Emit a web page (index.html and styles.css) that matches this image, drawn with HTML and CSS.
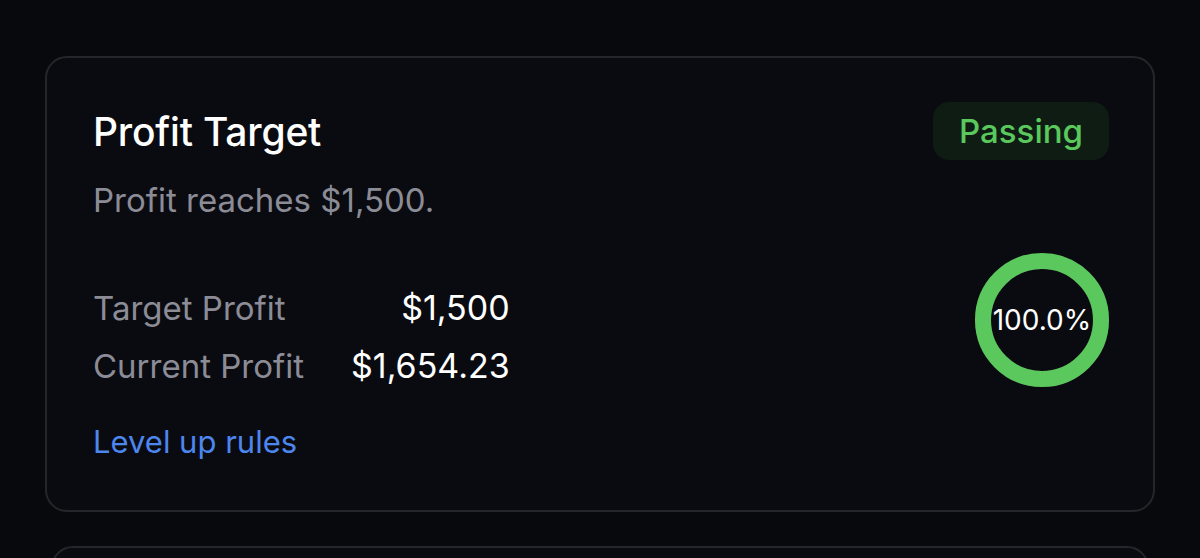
FILE: index.html
```html
<!DOCTYPE html>
<html lang="en">
<head>
    <meta charset="UTF-8">
    <meta name="viewport" content="width=device-width, initial-scale=1.0">
    <title>Objectives</title>
    <link rel="stylesheet" href="styles.css">
</head>
<body>
    <div class="page">
        <div class="card">
            <div class="card-head">
                <div class="card-title">Profit Target</div>
                <div class="badge badge-pass">Passing</div>
            </div>
            <div class="card-desc">Profit reaches $1,500.</div>

            <div class="card-body">
                <div class="card-info">
                    <div class="stats">
                        <div class="stat-label">Target Profit</div>
                        <div class="stat-value">$1,500</div>
                        <div class="stat-label">Current Profit</div>
                        <div class="stat-value">$1,654.23</div>
                    </div>
                    <a class="rules-link" href="#">Level up rules</a>
                </div>

                <div class="ring">
                    <svg viewBox="0 0 134 134" width="134" height="134">
                        <circle cx="67" cy="67" r="59" fill="none" stroke="#2a2b31" stroke-width="16"/>
                        <circle cx="67" cy="67" r="59" fill="none" stroke="#5ac85c" stroke-width="16"
                                stroke-dasharray="371 371" transform="rotate(-90 67 67)"/>
                    </svg>
                    <div class="ring-label">100.0%</div>
                </div>
            </div>
        </div>

        <div class="card card-next"></div>
    </div>
</body>
</html>
```

FILE: styles.css
```css
* {
    margin: 0;
    padding: 0;
    box-sizing: border-box;
}

body {
    background-color: #08090d;
    color: #fff;
    font-family: 'Inter', 'Noto Sans', sans-serif;
    height: 558px;
    overflow: hidden;
}

.page {
    padding: 56px 45px 0 45px;
    display: flex;
    flex-direction: column;
    gap: 34px;
}

.card {
    background-color: #0a0b10;
    border: 2px solid #25262b;
    border-radius: 22px;
    padding: 44px 44px 50px 46px;
}

.card-next {
    margin: 0 6px;
    height: 120px;
}

.card-head {
    display: flex;
    justify-content: space-between;
    align-items: center;
}

.card-title {
    font-size: 39px;
    font-weight: 500;
    letter-spacing: -0.2px;
}

.badge {
    font-size: 33px;
    font-weight: 500;
    padding: 0 26px;
    height: 58px;
    line-height: 58px;
    border-radius: 16px;
}

.badge-pass {
    background-color: #0f1c14;
    color: #5ac85c;
}

.card-desc {
    margin-top: 20px;
    font-size: 33px;
    color: #8c8c97;
}

.card-body {
    display: flex;
    justify-content: space-between;
    align-items: flex-start;
    margin-top: 33px;
}

.card-info {
    margin-top: 26px;
}

.stats {
    display: grid;
    grid-template-columns: auto auto;
    column-gap: 47px;
    font-size: 33px;
    line-height: 58px;
}

.stat-label {
    color: #8c8c97;
}

.stat-value {
    font-size: 34px;
    text-align: right;
}

.rules-link {
    display: block;
    margin-top: 28px;
    font-size: 31px;
    color: #4d86ef;
    text-decoration: none;
}

.ring {
    position: relative;
    width: 134px;
    height: 134px;
}

.ring svg {
    display: block;
}

.ring-label {
    position: absolute;
    inset: 0;
    display: flex;
    align-items: center;
    justify-content: center;
    font-size: 28px;
    color: #fff;
}
```
